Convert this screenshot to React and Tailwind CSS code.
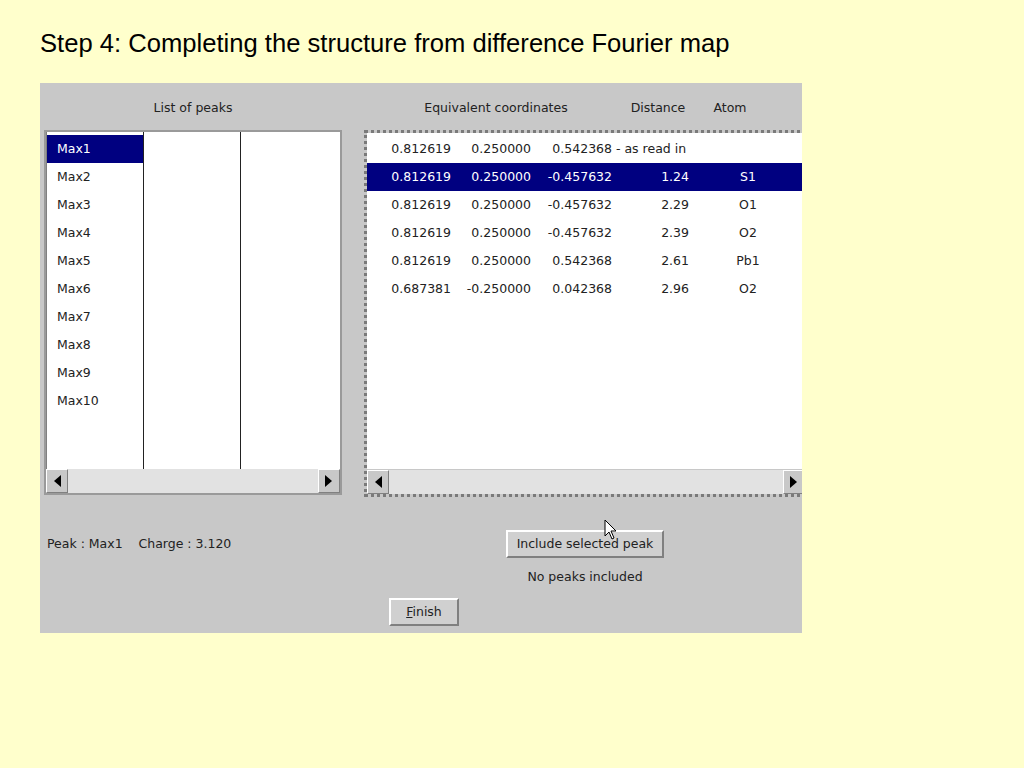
import React from 'react'

const peaks = ['Max1', 'Max2', 'Max3', 'Max4', 'Max5', 'Max6', 'Max7', 'Max8', 'Max9', 'Max10']

const rows = [
    { a: '0.812619', b: '0.250000', c: '0.542368', d: '', atom: '', note: ' - as read in' },
    { a: '0.812619', b: '0.250000', c: '-0.457632', d: '1.24', atom: 'S1', selected: true },
    { a: '0.812619', b: '0.250000', c: '-0.457632', d: '2.29', atom: 'O1' },
    { a: '0.812619', b: '0.250000', c: '-0.457632', d: '2.39', atom: 'O2' },
    { a: '0.812619', b: '0.250000', c: '0.542368', d: '2.61', atom: 'Pb1' },
    { a: '0.687381', b: '-0.250000', c: '0.042368', d: '2.96', atom: 'O2' },
]

function Arrow({ dir }) {
    return (
        <div className="w-[22px] h-full bg-[#C8C8C8] border border-t-white border-l-white border-b-[#808080] border-r-[#808080] flex items-center justify-center">
            <svg width="8" height="12" viewBox="0 0 8 12">
                {dir === 'left'
                    ? <polygon points="8,0 8,12 1,6" fill="#000" />
                    : <polygon points="0,0 0,12 7,6" fill="#000" />}
            </svg>
        </div>
    )
}

function Scrollbar() {
    return (
        <div className="h-[24px] flex bg-[#E2E2E2]">
            <Arrow dir="left" />
            <div className="flex-1" />
            <Arrow dir="right" />
        </div>
    )
}

function Button({ children, className }) {
    return (
        <button className={`h-[28px] bg-[#D0D0D0] border-2 border-t-white border-l-white border-b-[#808080] border-r-[#808080] text-[12.5px] text-[#222] ${className}`}>
            {children}
        </button>
    )
}

export default function App() {
    return (
        <div className="min-h-screen bg-[#FFFFCC] pt-[29px] pl-[40px]" style={{ fontFamily: '"DejaVu Sans", Tahoma, sans-serif' }}>
            <h1 className="text-[25.6px] leading-[28px] text-black" style={{ fontFamily: '"Liberation Sans", Arial, sans-serif' }}>
                Step 4: Completing the structure from difference Fourier map
            </h1>

            <div className="relative mt-[26px] w-[762px] h-[550px] bg-[#C8C8C8] overflow-hidden text-[12.5px] text-[#222]">
                {/* Headers */}
                <div className="h-[47px] pt-[4px] flex items-center">
                    <div className="ml-[4px] w-[298px] shrink-0 text-center">List of peaks</div>
                    <div className="ml-[44px] w-[220px] shrink-0 text-center">Equivalent coordinates</div>
                    <div className="ml-[22px] w-[60px] shrink-0 text-center">Distance</div>
                    <div className="ml-[22px] w-[40px] shrink-0 text-center">Atom</div>
                </div>

                {/* List boxes */}
                <div className="flex items-start">
                    <div className="ml-[4px] w-[298px] shrink-0 h-[365px] border-2 border-[#9A9A9A] bg-[#C8C8C8] flex flex-col">
                        <div className="h-[337px] bg-white flex border-l border-[#808080]">
                            <div className="w-[97px] border-r border-[#222] pt-[3px]">
                                {peaks.map((p, i) => (
                                    <div key={p} className={`h-[28px] flex items-center pl-[10px] ${i === 0 ? 'bg-[#000080] text-white' : ''}`}>{p}</div>
                                ))}
                            </div>
                            <div className="w-[97px] border-r border-[#222]" />
                            <div className="flex-1" />
                        </div>
                        <Scrollbar />
                    </div>

                    <div className="ml-[22px] w-[444px] shrink-0 h-[367px] border-[3px] border-dotted border-[#7A7A7A] bg-[#C8C8C8] flex flex-col">
                        <div className="h-[337px] bg-white pt-[2px]">
                            {rows.map((r, i) => (
                                <div key={i} className={`h-[28px] flex items-center ${r.selected ? 'bg-[#000080] text-white' : ''}`}>
                                    <div className="w-[84px] shrink-0 text-right">{r.a}</div>
                                    <div className="w-[80px] shrink-0 text-right">{r.b}</div>
                                    <div className="w-[81px] shrink-0 text-right">{r.c}</div>
                                    <div className="w-[77px] shrink-0 text-right whitespace-pre">
                                        {r.note ? <span className="block text-left">{r.note}</span> : r.d}
                                    </div>
                                    <div className="w-[118px] shrink-0 text-center">{r.atom}</div>
                                </div>
                            ))}
                        </div>
                        <div className="mt-[1px]"><Scrollbar /></div>
                    </div>
                </div>

                {/* Bottom controls */}
                <div className="flex items-center mt-[33px] h-[28px]">
                    <div className="ml-[7px] w-[459px] shrink-0 whitespace-pre pt-[1px]">Peak : Max1    Charge : 3.120</div>
                    <Button className="w-[158px] shrink-0">Include selected peak</Button>
                </div>
                <div className="ml-[466px] w-[158px] text-center mt-[10px] leading-[18px]">No peaks included</div>
                <div className="mt-[12px] ml-[349px]">
                    <Button className="w-[70px]"><span className="underline">F</span>inish</Button>
                </div>

                {/* Mouse cursor */}
                <svg className="absolute left-[564px] top-[436px]" width="14" height="22" viewBox="0 0 14 22">
                    <polygon points="1,1 1,17 5,13 8,20 10,19 7,12 12,12" fill="#fff" stroke="#000" strokeWidth="1" />
                </svg>
            </div>
        </div>
    )
}
